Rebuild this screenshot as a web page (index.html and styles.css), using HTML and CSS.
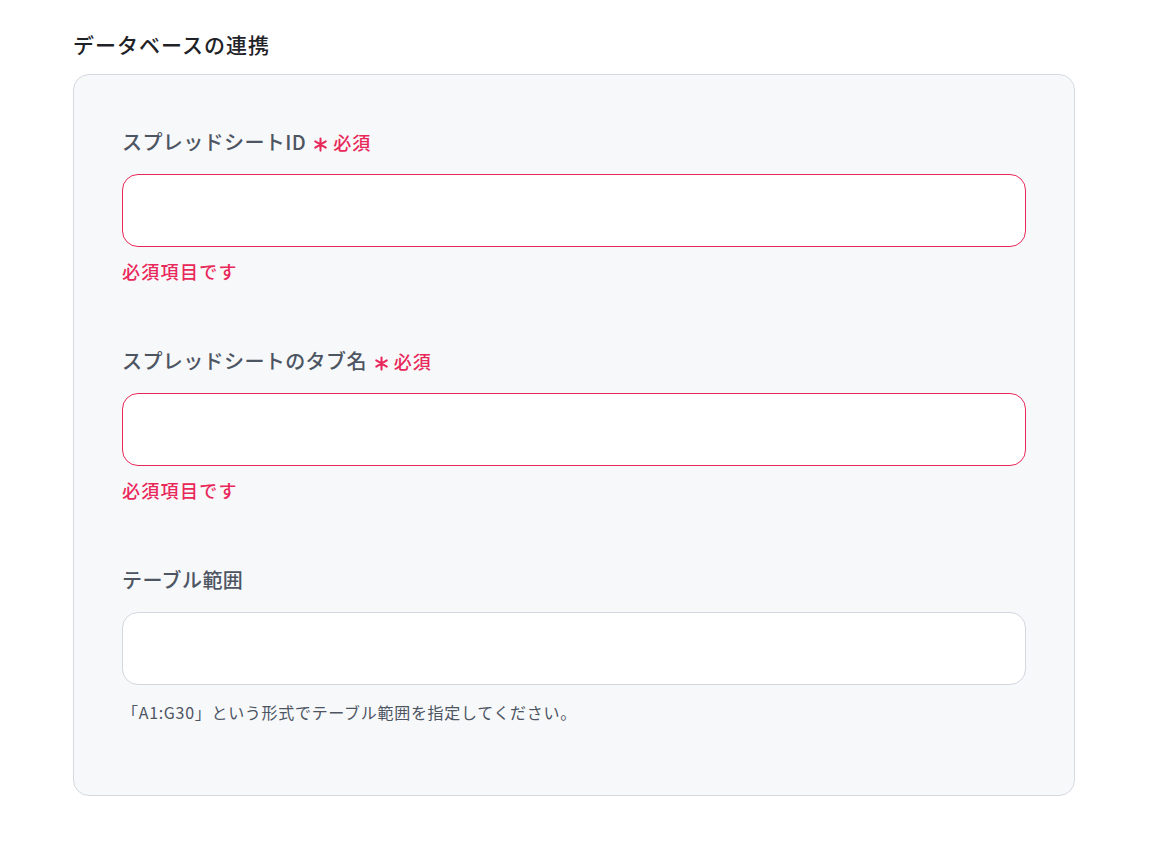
FILE: index.html
```html
<!DOCTYPE html>
<html lang="ja">
<head>
  <meta charset="UTF-8">
  <title>データベースの連携</title>
  <meta name="viewport" content="width=device-width, initial-scale=1.0" />
  <link rel="stylesheet" href="styles.css">
</head>
<body>
  <section class="section">
    <h2 class="section-title">データベースの連携</h2>
    <form class="card">
      <div class="field">
        <label class="field-label" for="sheetId">スプレッドシートID
          <span class="required">
            <svg class="star" viewBox="0 0 16 16" aria-hidden="true"><path d="M8 1.5v13M2.4 4.75l11.2 6.5M2.4 11.25l11.2-6.5"/></svg>必須
          </span>
        </label>
        <input class="input is-error" type="text" id="sheetId" />
        <div class="error">必須項目です</div>
      </div>

      <div class="field">
        <label class="field-label" for="tabName">スプレッドシートのタブ名
          <span class="required">
            <svg class="star" viewBox="0 0 16 16" aria-hidden="true"><path d="M8 1.5v13M2.4 4.75l11.2 6.5M2.4 11.25l11.2-6.5"/></svg>必須
          </span>
        </label>
        <input class="input is-error" type="text" id="tabName" />
        <div class="error">必須項目です</div>
      </div>

      <div class="field last">
        <label class="field-label" for="range">テーブル範囲</label>
        <input class="input" type="text" id="range" />
        <div class="help">「A1:G30」という形式でテーブル範囲を指定してください。</div>
      </div>
    </form>
  </section>
</body>
</html>
```

FILE: styles.css
```css
body {
  margin: 0;
  background: #fff;
  font-family: "Noto Sans CJK JP", "Noto Sans", sans-serif;
  color: #1f2328;
}

.section {
  width: 1002px;
  margin: 0 0 0 73px;
  padding-top: 28px;
}

.section-title {
  margin: 0 0 14px;
  font-size: 21px;
  line-height: 32px;
  font-weight: 500;
  letter-spacing: 1px;
  color: #1f2328;
}

.card {
  background: #f7f8fa;
  border: 1px solid #d5d9e0;
  border-radius: 16px;
  padding: 51px 48px 72px;
}

.field {
  display: flex;
  flex-direction: column;
  margin-bottom: 62px;
}

.field.last {
  margin-bottom: 0;
}

.field-label {
  display: flex;
  align-items: center;
  font-size: 20px;
  line-height: 32px;
  font-weight: 500;
  letter-spacing: 0.4px;
  color: #4d5562;
  margin-bottom: 16px;
}

.required {
  display: inline-flex;
  align-items: center;
  margin-left: 7px;
  font-size: 18px;
  font-weight: 500;
  letter-spacing: 1px;
  color: #e9285a;
}

.star {
  width: 15px;
  height: 15px;
  margin: 4px 5px 0 0;
  fill: none;
  stroke: currentColor;
  stroke-width: 2.2;
  stroke-linecap: round;
}

.input {
  box-sizing: border-box;
  width: 100%;
  height: 73px;
  padding: 0 20px;
  font-size: 18px;
  font-family: inherit;
  background: #fff;
  border: 1px solid #d3d7de;
  border-radius: 16px;
  outline: none;
}

.input.is-error {
  border-color: #e9285a;
}

.error {
  margin-top: 12px;
  font-size: 18px;
  line-height: 24px;
  font-weight: 500;
  letter-spacing: 1.3px;
  color: #e9285a;
}

.help {
  margin-top: 16px;
  font-size: 16px;
  line-height: 22px;
  letter-spacing: 0.7px;
  color: #4d5562;
}
```
